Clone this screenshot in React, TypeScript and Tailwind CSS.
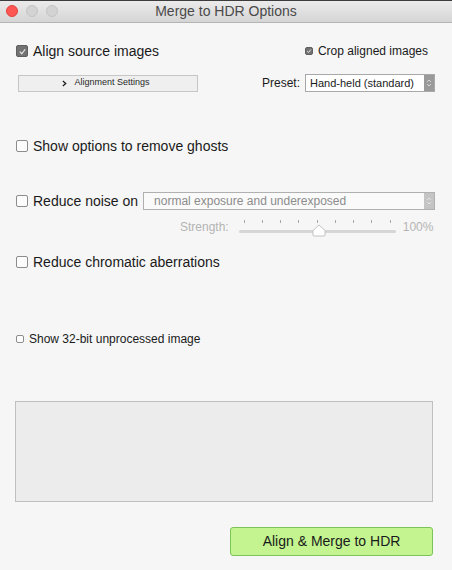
import React from "react";

function Check({ checked = false, size = "lg" }: { checked?: boolean; size?: "lg" | "sm" }) {
  const box = size === "lg" ? "h-[12px] w-[12px]" : "h-[8px] w-[8px]";
  if (checked) {
    return (
      <span className={`${box} flex shrink-0 items-center justify-center rounded-[2px] border border-[#5f5f5f] bg-[#727272]`}>
        <svg viewBox="0 0 10 10" className={size === "lg" ? "h-[9px] w-[9px]" : "h-[6px] w-[6px]"}>
          <path d="M2 5.2 L4.2 7.5 L8 2.5" fill="none" stroke="#e8e8e8" strokeWidth={size === "lg" ? 1.3 : 1.6} />
        </svg>
      </span>
    );
  }
  return <span className={`${box} shrink-0 rounded-[2px] border border-[#8c8c8c] bg-[#fcfcfc]`} />;
}

function Stepper({ light = false }: { light?: boolean }) {
  return (
    <span className={`flex h-full w-[10px] items-center justify-center ${light ? "bg-[#c4c4c4]" : "bg-[#9a9a9a]"}`}>
      <svg viewBox="0 0 8 12" className="h-[10px] w-[6px]">
        <path d="M1.5 4.5 L4 2 L6.5 4.5 M1.5 7.5 L4 10 L6.5 7.5" fill="none" stroke={light ? "#f0f0f0" : "#eeeeee"} strokeWidth="1" />
      </svg>
    </span>
  );
}

const ticks = [0, 1, 2, 3, 4, 5, 6, 7, 8];

export default function App() {
  return (
    <div className="flex h-[570px] w-[452px] flex-col overflow-hidden bg-[#f6f6f6] font-['Liberation_Sans',Arial,sans-serif] text-[#1a1a1a]">
      {/* title bar */}
      <div className="relative flex h-[23px] shrink-0 items-center justify-center border-b border-[#b4b4b4] border-t border-t-[#3c3c3c] bg-gradient-to-b from-[#ebebeb] to-[#d5d5d5]">
        <div className="absolute left-[6px] top-[4px] flex gap-[8px]">
          <span className="h-[12px] w-[12px] rounded-full border border-[#e0443e] bg-[#fc5753]" />
          <span className="h-[12px] w-[12px] rounded-full border border-[#c4c4c4] bg-[#d3d3d3]" />
          <span className="h-[12px] w-[12px] rounded-full border border-[#c4c4c4] bg-[#d3d3d3]" />
        </div>
        <span className="text-[14px] text-[#4a4a4a]">Merge to HDR Options</span>
      </div>

      <div className="flex flex-col px-[16px]">
        {/* align row */}
        <div className="mt-[20px] flex h-[16px] items-center justify-between pr-[8px]">
          <label className="flex items-center gap-[5px] text-[14px]">
            <Check checked />
            Align source images
          </label>
          <label className="flex items-center gap-[5px] text-[12px]">
            <Check checked size="sm" />
            Crop aligned images
          </label>
        </div>

        {/* alignment settings / preset */}
        <div className="mt-[15px] flex h-[18px] items-center justify-between pl-[2px] pr-[1px]">
          <button className="flex h-[17px] w-[180px] items-center justify-center gap-[6px] border border-[#c6c6c6] bg-[#efefef] pr-[4px] text-[9px] text-[#2a2a2a]">
            <svg viewBox="0 0 6 8" className="mr-[1px] h-[7px] w-[5px]">
              <path d="M1 1 L4.5 4 L1 7" fill="none" stroke="#1a1a1a" strokeWidth="1.5" />
            </svg>
            Alignment Settings
          </button>
          <div className="flex items-center gap-[5px]">
            <span className="text-[12px]">Preset:</span>
            <div className="flex h-[18px] w-[130px] items-stretch border border-[#a8a8a8] bg-white">
              <span className="flex flex-1 items-center justify-center pr-[6px] text-[11px]">Hand-held (standard)</span>
              <Stepper />
            </div>
          </div>
        </div>

        {/* ghosts */}
        <label className="mt-[46px] flex h-[16px] items-center gap-[5px] text-[14px]">
          <Check />
          Show options to remove ghosts
        </label>

        {/* noise */}
        <div className="mt-[38px] flex h-[18px] items-center pr-[1px]">
          <label className="flex items-center gap-[5px] text-[14px]">
            <Check />
            Reduce noise on
          </label>
          <div className="ml-[5px] flex h-[18px] flex-1 items-stretch border border-[#b0b0b0] bg-[#fafafa]">
            <span className="flex flex-1 items-center pl-[10px] text-[12px] text-[#8c8c8c]">normal exposure and underexposed</span>
            <Stepper light />
          </div>
        </div>

        {/* strength */}
        <div className="mt-[8px] flex items-end pl-[164px] text-[12px] text-[#b4b4b4]">
          <span>Strength:</span>
          <div className="relative ml-[10px] h-[16px] w-[157px]">
            <div className="flex justify-between px-[5px]">
              {ticks.map((t) => (
                <span key={t} className="h-[3px] w-px bg-[#a8a8a8]" />
              ))}
            </div>
            <div className="absolute left-0 right-0 top-[10px] h-[3px] rounded-full bg-[#d6d6d6]" />
            <svg viewBox="0 0 14 13" className="absolute left-[73px] top-[4px] h-[13px] w-[14px]">
              <path d="M1 11 V6.5 L7 1 L13 6.5 V11 Q13 12 12 12 H2 Q1 12 1 11 Z" fill="#ffffff" stroke="#c2c2c2" strokeWidth="1" />
            </svg>
          </div>
          <span className="ml-[7px]">100%</span>
        </div>

        {/* chromatic */}
        <label className="mt-[18px] flex h-[16px] items-center gap-[5px] text-[14px]">
          <Check />
          Reduce chromatic aberrations
        </label>

        {/* 32-bit */}
        <label className="mt-[62px] flex h-[14px] items-center gap-[5px] text-[12px]">
          <Check size="sm" />
          Show 32-bit unprocessed image
        </label>

        {/* preview box */}
        <div className="ml-[-1px] mr-[3px] mt-[55px] h-[101px] border border-[#bfbfbf] bg-[#ececec]" />

        {/* action */}
        <div className="mt-[25px] flex justify-end pr-[3px]">
          <button className="flex h-[29px] w-[203px] items-center justify-center rounded-[3px] border border-[#7cc459] bg-[#c3f48f] text-[14px] text-[#1a1a1a]">
            Align &amp; Merge to HDR
          </button>
        </div>
      </div>
    </div>
  );
}
